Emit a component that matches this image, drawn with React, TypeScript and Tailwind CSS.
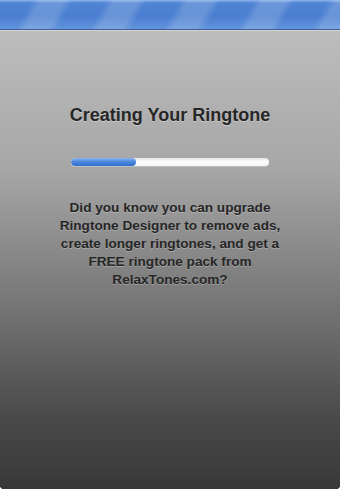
export default function App() {
  return (
    <div className="w-[340px] h-[489px] overflow-hidden rounded-b-[4px] bg-black">
      <div className="flex h-full flex-col bg-[linear-gradient(180deg,#c2c2c2_0%,#a6a6a6_35%,#7a7a7a_60%,#4a4a4a_85%,#383838_100%)] font-['Liberation_Sans',Arial,sans-serif] rounded-b-[4px]">
        <div className="h-[29px] bg-[repeating-linear-gradient(120deg,rgba(255,255,255,0)_0px,rgba(255,255,255,0)_28px,rgba(255,255,255,0.16)_36px,rgba(255,255,255,0.16)_56px,rgba(255,255,255,0)_64px),linear-gradient(180deg,#8db4ec_0px,#4f83d3_3px,#4a7ed0_55%,#6193dc_100%)]" />
        <div className="h-px bg-[#3f5f93]" />
        <div className="h-px bg-[#d4d4d4]" />
        <div className="flex flex-col items-center pt-[73px]">
          <h1 className="text-[18px] leading-[22px] font-bold text-[#262626] [text-shadow:0_1px_0_rgba(255,255,255,0.35)]">
            Creating Your Ringtone
          </h1>
          <div className="mt-[32px] h-[8px] w-[198px] overflow-hidden rounded-full bg-[linear-gradient(180deg,#e6e6e6,#ffffff_50%,#f2f2f2)] shadow-[0_1px_0_rgba(255,255,255,0.3)]">
            <div className="h-full w-[65px] rounded-full bg-[linear-gradient(180deg,#8cb5ee_0%,#4d89dd_45%,#2f6ccc_100%)]" />
          </div>
          <p className="mt-[33px] w-[250px] text-center text-[13.6px] leading-[18px] font-bold text-[#262626] [text-shadow:0_1px_0_rgba(255,255,255,0.25)]">
            Did you know you can upgrade Ringtone Designer to remove ads, create longer ringtones, and get a FREE ringtone pack from RelaxTones.com?
          </p>
        </div>
      </div>
    </div>
  );
}
